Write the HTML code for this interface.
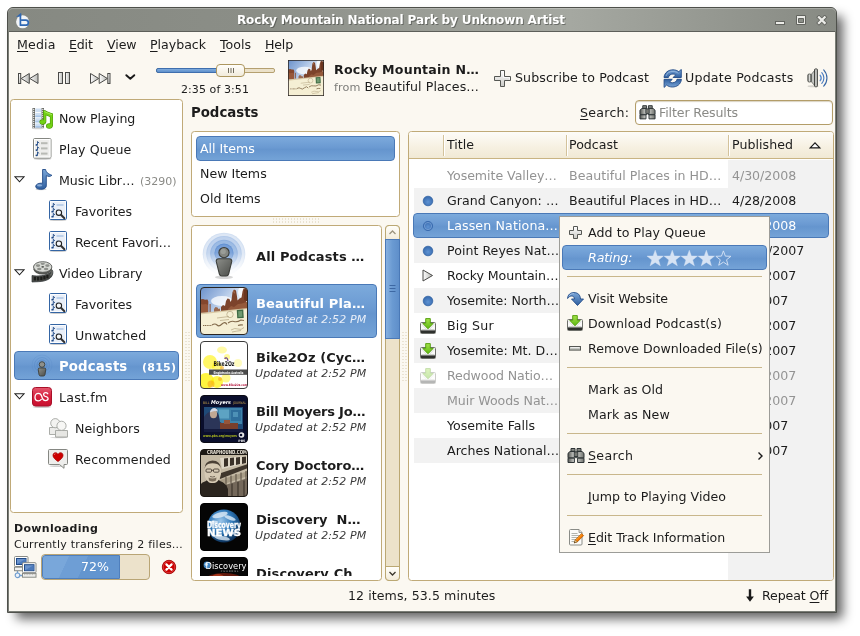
<!DOCTYPE html>
<html>
<head>
<meta charset="utf-8">
<title>Banshee</title>
<style>
*{box-sizing:border-box;margin:0;padding:0}
html,body{width:860px;height:636px;overflow:hidden;background:#fff}
body{font-family:"DejaVu Sans","Liberation Sans",sans-serif;font-size:12.6px;color:#1c1c1c;position:relative}
.abs{position:absolute}
.t{position:absolute;white-space:pre;line-height:16px;height:16px;will-change:transform}
u{text-decoration:underline;text-underline-offset:1.5px;text-decoration-thickness:1px}
#shadow{left:16px;top:16px;width:827px;height:603px;border-radius:4px;background:rgba(0,0,0,.6);filter:blur(5.5px)}
#win{left:7px;top:7px;width:830px;height:606px;background:#7b7e77;border:1px solid #4e504b;border-radius:6px 6px 0 0}
#titlebar{left:0;top:0;width:828px;height:23px;border-radius:5px 5px 0 0;box-shadow:inset 0 1px 0 rgba(255,255,255,.25);background:linear-gradient(90deg,#868982 0%,#8b8e87 30%,#9b9e97 52%,#a5a8a1 68%,#969992 84%,#878a83 100%)}
#client{left:9px;top:32px;width:826px;height:579px;background:#fbf8f1;box-shadow:0 -1px 0 #5d5f5a}
.panel{position:absolute;background:#fff;border:1px solid #c0aa78;border-radius:3.5px;overflow:hidden}
.sel{position:absolute;border:1px solid #4a79b7;border-radius:4px;background:linear-gradient(#7caadc 0%,#6b9ad2 45%,#6595ce 55%,#74a3d7 100%)}
.sep{position:absolute;height:1px;left:567px;width:195px;background:#c9b78c}
.stripe{position:absolute;left:5px;width:420px;height:25px;background:#f2f2f2}
</style>
</head>
<body>
<svg width="0" height="0" style="position:absolute"><defs>
<linearGradient id="gGray" x1="0" y1="0" x2="0" y2="1"><stop offset="0" stop-color="#fff"/><stop offset="1" stop-color="#c9c9c5"/></linearGradient>
<linearGradient id="gGrayH" x1="0" y1="0" x2="1" y2="0"><stop offset="0" stop-color="#fdfdfd"/><stop offset="1" stop-color="#b9bab6"/></linearGradient>
<linearGradient id="gBlue" x1="0" y1="0" x2="0" y2="1"><stop offset="0" stop-color="#7aa6d8"/><stop offset="1" stop-color="#2f5f9f"/></linearGradient>
<linearGradient id="gGreen" x1="0" y1="0" x2="0" y2="1"><stop offset="0" stop-color="#a5e24a"/><stop offset="1" stop-color="#5cb80f"/></linearGradient>
<linearGradient id="gRed" x1="0" y1="0" x2="0" y2="1"><stop offset="0" stop-color="#e5586f"/><stop offset="0.5" stop-color="#d51f3c"/><stop offset="1" stop-color="#c9102f"/></linearGradient>
<linearGradient id="gMetal" x1="0" y1="0" x2="1" y2="0"><stop offset="0" stop-color="#555753"/><stop offset="0.45" stop-color="#e4e5e2"/><stop offset="1" stop-color="#6f716c"/></linearGradient>
<linearGradient id="gBody" x1="0" y1="0" x2="1" y2="1"><stop offset="0" stop-color="#8d8f8a"/><stop offset="1" stop-color="#4b4d49"/></linearGradient>
<linearGradient id="gSky" x1="0" y1="0" x2="0.7" y2="0.55"><stop offset="0" stop-color="#6a90ca"/><stop offset="0.5" stop-color="#a9c1e4"/><stop offset="1" stop-color="#f4f7fb"/></linearGradient>
<radialGradient id="gRings" cx="0.5" cy="0.48" r="0.5"><stop offset="0" stop-color="#3f78c4" stop-opacity=".95"/><stop offset="0.45" stop-color="#5d8fd0" stop-opacity=".75"/><stop offset="0.7" stop-color="#86abdc" stop-opacity=".5"/><stop offset="0.9" stop-color="#b7cdeb" stop-opacity=".3"/><stop offset="1" stop-color="#dfe9f6" stop-opacity="0"/></radialGradient>
<linearGradient id="gFadeB" x1="0" y1="0" x2="0" y2="1"><stop offset="0" stop-color="#fff" stop-opacity="0"/><stop offset="0.3" stop-color="#fff" stop-opacity=".1"/><stop offset="0.8" stop-color="#fff" stop-opacity=".9"/><stop offset="1" stop-color="#fff" stop-opacity="1"/></linearGradient>
<radialGradient id="gEarth" cx="0.4" cy="0.35" r="0.7"><stop offset="0" stop-color="#9cc6ea"/><stop offset="0.5" stop-color="#2f78b8"/><stop offset="1" stop-color="#08294f"/></radialGradient>
<radialGradient id="gDot" cx="0.5" cy="0.6" r="0.6"><stop offset="0" stop-color="#5f93d3"/><stop offset="1" stop-color="#3568ac"/></radialGradient>
<g id="smartpl"><rect x="0.500" y="0.500" width="17" height="19" rx="1.200" fill="#e9eff8" stroke="#3465a4"/><rect x="1.500" y="1.500" width="15" height="17" fill="none" stroke="#fff" stroke-opacity=".8"/>
<path d="M4.3 3.2v3.300M4.3 3.5l1.700 1.300" stroke="#204a87" stroke-width=".9" fill="none"/><ellipse cx="3.5" cy="6.7" rx="1.200" ry=".9" fill="#204a87"/><path d="M4.3 8.2v3.300M4.3 8.5l1.700 1.300" stroke="#204a87" stroke-width=".9" fill="none"/><ellipse cx="3.5" cy="11.7" rx="1.200" ry=".9" fill="#204a87"/><path d="M4.3 13.2v3.300M4.3 13.5l1.700 1.300" stroke="#204a87" stroke-width=".9" fill="none"/><ellipse cx="3.5" cy="16.7" rx="1.200" ry=".9" fill="#204a87"/>
<rect x="7.500" y="4" width="7" height="2" fill="#bcd0ea"/><rect x="7.500" y="9" width="2" height="2" fill="#bcd0ea"/>
<circle cx="9.900" cy="12.700" r="2.700" fill="#f4f7fb" stroke="#222" stroke-width="1.100"/><path d="M12.200 15l3.200 3.200" stroke="#333" stroke-width="2" stroke-linecap="round"/></g>
<g id="dlicon"><rect x="0.500" y="4.500" width="15" height="11" rx="1" fill="#fafaf9" stroke="#6e706b"/><path d="M1 12.300h14v2.700H1z" fill="#2e302d"/><path d="M1.500 11.700h13" stroke="#b9bbb6" stroke-width=".8"/><path d="M1.200 5.500l5 5.500M14.800 5.500l-5 5.500" stroke="#d3d5d0" stroke-width=".8"/>
<path d="M5.700 0.600h4.600v4.800h2.900L8 10.800 2.800 5.400h2.900z" fill="url(#gGreen)" stroke="#4e9a06" stroke-width=".9" stroke-linejoin="round"/></g>
<g id="binoc"><path d="M3.5 0.5h4v2.8h-4zM9.5 0.5h4v2.8h-4z" fill="#888a85" stroke="#2e3436"/><path d="M2.5 3.5h5.4v6.3H0.5V5.3zM14.5 3.5H9.1v6.3h7.4V5.3z" fill="url(#gMetal)" stroke="#2e3436" stroke-linejoin="round"/><rect x="6.7" y="4" width="3.6" height="4.6" fill="#777974" stroke="#2e3436" stroke-width=".8"/>
<path d="M0.5 10.2h6.4v4.3H0.5zM10.1 10.2h6.4v4.3h-6.4z" fill="url(#gMetal)" stroke="#2e3436" stroke-linejoin="round"/></g>
<g id="plus16"><path d="M6.5 0.5h4v6h6v4h-6v6h-4v-6h-6v-4h6z" fill="url(#gGray)" stroke="#555753" stroke-linejoin="round"/><path d="M7.5 1.5h2v6h6v2" fill="none" stroke="#fff" stroke-opacity=".7"/></g>
<path id="star" d="M0 -8.4L2.1 -2.7 8.2 -2.5 3.4 1.3 5.1 7.2 0 3.8 -5.1 7.2 -3.4 1.3 -8.2 -2.5 -2.1 -2.7Z"/>
<clipPath id="r48"><rect x="0.5" y="0.5" width="47" height="47" rx="3.5"/></clipPath>
</defs></svg>
<div id="shadow" class="abs"></div>
<div id="win" class="abs"><div id="titlebar" class="abs"></div></div>
<div id="client" class="abs"></div>
<svg class="abs" style="left:13px;top:11px;" width="20" height="20" viewBox="0 0 20 20"><circle cx="9.600" cy="10.800" r="6.500" fill="#f2f4f7"/>
<path d="M7.400 3.400v10.800h5.400a2.550 2.550 0 0 0 0-5.100H8.300" fill="none" stroke="#2f68b4" stroke-width="1.700" stroke-linejoin="round"/>
<path d="M8.200 1.700L3 6l5.200-.8z" fill="#2f68b4"/></svg>
<svg class="abs" style="left:775px;top:15px;" width="53" height="11" viewBox="0 0 53 11"><rect x="0.500" y="6.500" width="9" height="3" fill="#ecece8" stroke="#62645f"/>
<path d="M21.500 0.500h9v9h-9z M23.500 3.500v4h5v-4z" fill="#ecece8" stroke="#62645f" fill-rule="evenodd"/>
<path d="M44 2.300l5.600 5.600M49.600 2.300l-5.600 5.600" stroke="#62645f" stroke-width="3.900" stroke-linecap="square"/>
<path d="M44 2.300l5.600 5.600M49.600 2.300l-5.600 5.600" stroke="#ecece8" stroke-width="2.300" stroke-linecap="square"/></svg>
<svg class="abs" style="left:17.5px;top:71.5px;" width="120" height="13" viewBox="0 0 120 13"><g stroke="#4a4a48" stroke-width="1" stroke-linejoin="miter">
<rect x="0.5" y="1.5" width="2.2" height="10" fill="url(#gGray)"/>
<path d="M11.3 1.5v10L3.2 6.5z" fill="url(#gGrayH)"/><path d="M20 1.5v10L11.8 6.5z" fill="url(#gGrayH)"/>
<rect x="40.5" y="0.5" width="4" height="11" fill="url(#gGrayH)"/><rect x="47.5" y="0.5" width="4" height="11" fill="url(#gGrayH)"/>
<path d="M72.5 1.5v10l8.2-5z" fill="url(#gGrayH)"/><path d="M81.2 1.5v10l8.2-5z" fill="url(#gGrayH)"/>
<rect x="89.8" y="1.5" width="2.2" height="10" fill="url(#gGray)"/></g>
<path d="M108.3 3.2l4 3.6 4-3.6" fill="none" stroke="#1a1a1a" stroke-width="1.9" stroke-linecap="round" stroke-linejoin="round"/></svg>
<div class="abs" style="left:156px;top:68px;width:119px;height:5px;border:1px solid #b5a070;border-radius:2px;background:#ebe1c9"></div><div class="abs" style="left:156px;top:68px;width:66px;height:5px;border:1px solid #3f6fae;border-radius:2px;background:linear-gradient(#7eabdd,#5f90cb)"></div><div class="abs" style="left:216px;top:64px;width:29px;height:13px;border:1px solid #ad975f;border-radius:4px;background:linear-gradient(#fffefb,#f1ebdb)"></div><svg class="abs" style="left:227px;top:67px;" width="8" height="7" viewBox="0 0 8 7"><path d="M1.5 1v5M4 1v5M6.5 1v5" stroke="#6f6a5c" stroke-width="1"/></svg>
<svg class="abs" style="left:288px;top:60px;" width="36" height="36" viewBox="0 0 48 48"><g ><rect width="48" height="48" fill="url(#gSky)"/>
<ellipse cx="22" cy="14" rx="11" ry="5" fill="#fff" opacity=".75"/><ellipse cx="43" cy="5" rx="5" ry="6" fill="#fff" opacity=".8"/>
<path d="M0 12.500l3-.5 2 .8 2.500-.3 .8 2v11H0z" fill="#84462c"/><path d="M0 17l3 .5 3-.5 2 1v8H0z" fill="#9c5c3e" opacity=".8"/>
<rect x="9.500" y="17" width="1.200" height="8" fill="#8d5a42"/><path d="M14 22l1.500-2 2 .5 1 1.500 1.500-.5v4h-6z" fill="#9a6a50"/>
<path d="M21 25v-5l2-2 2 1 1-5 1.500-2.500 2 .5 1 3 1-2 1-8 1.500-2.500 2 1 1 6 .5 4 2-2 2-1 1-6 1-3 2.500-.5V26z" fill="#7c432b"/>
<path d="M28 22l3-3 3 1 4-3 4-.5 6-2v12H27z" fill="#955a3c"/><path d="M33 5l1-2 1.200 4z" fill="#a86e4e"/><path d="M44 3l2-1 2 1v12l-4-2z" fill="#6a351f"/>
<path d="M0 26l48-5v27H0z" fill="#d9c9a6"/>
<path d="M0 27.500l48-5.500v26H0z" fill="#f5efd4"/>
<rect x="37" y="22.800" width="6.500" height="8.400" fill="#3f6b45" transform="rotate(-3 40 27)"/><rect x="38.300" y="24.200" width="3.900" height="5.600" fill="#6f9a70" transform="rotate(-3 40 27)"/>
<g stroke="#6f5434" stroke-width="1.100" fill="none" opacity=".85"><path d="M3 38.500h9" stroke-dasharray="1.200 .6"/><path d="M12 38q3-2 5 0t5-1 5 .5" /><path d="M28 36q3-2.500 6-1.500t7-1.500l3 .5"/><path d="M38 38.500q2-1 5-.5"/></g>
<g stroke="#9a8660" stroke-width=".7" fill="none" opacity=".7"><path d="M31 43q4-2.500 7-1t6-1.500"/><path d="M32 45q5-1 9-1.500"/><circle cx="30" cy="27.500" r="3.200"/><path d="M17 31l12-1.500M20 33.500l9-1"/></g></g>
<rect x="0.500" y="0.500" width="47" height="47" rx="0" fill="none" stroke="#2a2522"/></svg>
<svg class="abs" style="left:493.5px;top:69.5px;" width="17" height="17" viewBox="0 0 17 17"><use href="#plus16"/></svg>
<svg class="abs" style="left:663.2px;top:68.6px;" width="20" height="19" viewBox="0 0 20 19"><g id="rfa"><path d="M1 8.500C1.500 3.500 5.500 0.800 10 0.800c2.300 0 4.200 .7 5.800 1.900L18.300 0.400v8.100h-8.200l2.600-2.600C11.900 5.300 11 5 10 5 7.400 5 5.800 6.600 5.400 8.500z" fill="url(#gBlue)" stroke="#204a87" stroke-width=".9" stroke-linejoin="round"/></g>
<use href="#rfa" transform="rotate(180 9.700 9.400)"/>
<path d="M3 7c1-3 3.600-4.600 7-4.600 2.200 0 4 .8 5.400 2" fill="none" stroke="#a8c4e6" stroke-width=".8" opacity=".8"/></svg>
<svg class="abs" style="left:806.8px;top:68.3px;" width="23" height="20" viewBox="0 0 23 20"><ellipse cx="6" cy="18.300" rx="5.500" ry="1" fill="#000" opacity=".15"/>
<rect x="0.800" y="6" width="3.400" height="8" rx="1.300" fill="url(#gMetal)" stroke="#4a4c48" stroke-width=".8"/>
<path d="M4.200 6.500L8 2v16L4.200 13.500z" fill="url(#gMetal)" stroke="#555753" stroke-width=".7"/>
<rect x="7.500" y="0.800" width="3" height="18" rx="1.200" fill="url(#gMetal)" stroke="#3c3e3a" stroke-width=".8"/>
<g fill="none" stroke-linecap="round"><path d="M13.200 7.300a4.500 4.500 0 0 1 0 5.400" stroke="#5b8ccc" stroke-width="1.300"/><path d="M14.800 4.600a8 8 0 0 1 0 10.800" stroke="#4a7cc0" stroke-width="1.150"/><path d="M16.700 1.800a12 12 0 0 1 0 16.400" stroke="#3465a4" stroke-width="1.100"/></g></svg>
<div class="abs" style="left:635px;top:100px;width:198px;height:25px;background:#fff;border:1px solid #b39d68;border-radius:4px;box-shadow:inset 0 1px 1px rgba(150,130,80,.35)"></div>
<svg class="abs" style="left:638.5px;top:104.5px;" width="17" height="15.5" viewBox="-0.5 0 18 16"><use href="#binoc"/></svg>
<div class="panel" style="left:10px;top:99px;width:173px;height:414px"></div>
<div class="sel" style="left:14px;top:351px;width:165px;height:29px"></div>
<svg class="abs" style="left:31.5px;top:106.5px;" width="22" height="23" viewBox="0 0 22 23"><rect x="0.500" y="1" width="11.500" height="20" fill="#5d5f5a"/><rect x="3" y="1" width="6.500" height="20" fill="#fff"/>
<g fill="#cfe0f3"><rect x="3.300" y="1.500" width="5.900" height="3.600"/><rect x="3.300" y="6" width="5.900" height="4.200"/><rect x="3.300" y="11.200" width="5.900" height="4.200"/><rect x="3.300" y="16.400" width="5.900" height="4.200"/></g>
<g fill="#a9c6e8"><rect x="3.300" y="8.500" width="5.900" height="1.700"/><rect x="3.300" y="13.700" width="5.900" height="1.700"/><rect x="3.300" y="18.900" width="5.900" height="1.700"/></g>
<g fill="#fff"><rect x="1.100" y="1.8" width="1.200" height="1.100"/><rect x="10.200" y="1.8" width="1.200" height="1.100"/><rect x="1.100" y="3.8" width="1.200" height="1.100"/><rect x="10.200" y="3.8" width="1.200" height="1.100"/><rect x="1.100" y="5.8" width="1.200" height="1.100"/><rect x="10.200" y="5.8" width="1.200" height="1.100"/><rect x="1.100" y="7.8" width="1.200" height="1.100"/><rect x="10.200" y="7.8" width="1.200" height="1.100"/><rect x="1.100" y="9.8" width="1.200" height="1.100"/><rect x="10.200" y="9.8" width="1.200" height="1.100"/><rect x="1.100" y="11.8" width="1.200" height="1.100"/><rect x="10.200" y="11.8" width="1.200" height="1.100"/><rect x="1.100" y="13.8" width="1.200" height="1.100"/><rect x="10.200" y="13.8" width="1.200" height="1.100"/><rect x="1.100" y="15.8" width="1.200" height="1.100"/><rect x="10.200" y="15.8" width="1.200" height="1.100"/><rect x="1.100" y="17.8" width="1.200" height="1.100"/><rect x="10.200" y="17.8" width="1.200" height="1.100"/><rect x="1.100" y="19.8" width="1.200" height="1.100"/><rect x="10.200" y="19.8" width="1.200" height="1.100"/></g>
<ellipse cx="6" cy="21.300" rx="6.500" ry="0.900" fill="#000" opacity=".18"/>
<g fill="#4e9a06" stroke="#4e9a06" stroke-width="1.200" stroke-linejoin="round"><path d="M11.900 3.700l8.400 3.400v3.200l-8.400-3.400z"/><rect x="11.900" y="4" width="1.800" height="11"/><rect x="18.500" y="7" width="1.800" height="12"/><ellipse cx="10.700" cy="15" rx="2.700" ry="2.100"/><ellipse cx="17.300" cy="19" rx="2.700" ry="2.100"/></g>
<g fill="#73d216"><path d="M11.900 3.700l8.400 3.400v3.200l-8.400-3.400z"/><rect x="11.900" y="4" width="1.800" height="11"/><rect x="18.500" y="7" width="1.800" height="12"/><ellipse cx="10.700" cy="15" rx="2.700" ry="2.100"/><ellipse cx="17.300" cy="19" rx="2.700" ry="2.100"/></g>
<path d="M12.300 4.600l7.600 3.100" stroke="#b5ee6a" stroke-width=".8" fill="none"/></svg>
<svg class="abs" style="left:33px;top:137.5px;" width="19" height="22" viewBox="0 0 19 22"><ellipse cx="9.500" cy="20.800" rx="9" ry="1" fill="#000" opacity=".22"/><rect x="0.500" y="0.500" width="17.500" height="19.500" rx="1.200" fill="#ededeb" stroke="#858782"/><rect x="1.500" y="1.500" width="15.500" height="17.500" fill="none" stroke="#fff"/>
<path d="M4.5 3.4v3.300M4.5 3.7l1.700 1.300" stroke="#204a87" stroke-width=".9" fill="none"/><ellipse cx="3.7" cy="6.9" rx="1.200" ry=".9" fill="#204a87"/><path d="M4.5 8.6v3.300M4.5 8.9l1.700 1.300" stroke="#204a87" stroke-width=".9" fill="none"/><ellipse cx="3.7" cy="12.1" rx="1.200" ry=".9" fill="#204a87"/><path d="M4.5 13.8v3.300M4.5 14.1l1.700 1.300" stroke="#204a87" stroke-width=".9" fill="none"/><ellipse cx="3.7" cy="17.3" rx="1.200" ry=".9" fill="#204a87"/>
<g fill="#b8bab5"><rect x="8" y="4.200" width="6.500" height="2"/><rect x="8" y="9.400" width="6.500" height="2"/><rect x="8" y="14.600" width="6.500" height="2"/></g></svg>
<svg class="abs" style="left:34.5px;top:168.5px;" width="18" height="22" viewBox="0 0 18 22"><ellipse cx="6" cy="20.300" rx="5.500" ry="0.900" fill="#000" opacity=".18"/>
<path d="M7.600 0.500h3c.4 2.600 2.200 4.300 6.300 5.800-1.600 1.600-3.800 1.300-5.600 .3v10.300c0 2.200-2.500 3.400-5.600 3.400C2.800 20.300 0.700 19.200 0.700 17.500c0-2 2.600-3.300 5.300-3.300.6 0 1.100 0 1.600 .2z" fill="url(#gBlue)" stroke="#204a87" stroke-width=".9" stroke-linejoin="round"/>
<ellipse cx="4.600" cy="16.400" rx="2.600" ry="1.100" fill="#a9c6ea" opacity=".7"/></svg>
<svg class="abs" style="left:49px;top:200px;" width="19" height="21" viewBox="0 0 19 21"><ellipse cx="9" cy="20.300" rx="8.500" ry="0.800" fill="#000" opacity=".2"/><use href="#smartpl"/></svg>
<svg class="abs" style="left:49px;top:231px;" width="19" height="21" viewBox="0 0 19 21"><ellipse cx="9" cy="20.300" rx="8.500" ry="0.800" fill="#000" opacity=".2"/><use href="#smartpl"/></svg>
<svg class="abs" style="left:49px;top:293px;" width="19" height="21" viewBox="0 0 19 21"><ellipse cx="9" cy="20.300" rx="8.500" ry="0.800" fill="#000" opacity=".2"/><use href="#smartpl"/></svg>
<svg class="abs" style="left:49px;top:324px;" width="19" height="21" viewBox="0 0 19 21"><ellipse cx="9" cy="20.300" rx="8.500" ry="0.800" fill="#000" opacity=".2"/><use href="#smartpl"/></svg>
<svg class="abs" style="left:30.5px;top:261px;" width="23" height="23" viewBox="0 0 23 23"><path d="M1 14.500c5 1 14 .5 19-3.500l1.300 1.200c.6 5-6 8.300-14 8.500L1 21z" fill="#4a4c48" stroke="#2e3436" stroke-width=".7"/>
<g fill="#1c1d1b"><rect x="2.800" y="15.800" width="2.300" height="3.600"/><rect x="6" y="15.900" width="2.300" height="3.600"/><rect x="9.200" y="15.600" width="2.300" height="3.600"/><rect x="12.300" y="15" width="2.300" height="3.500"/><rect x="15.300" y="14" width="2.200" height="3.300"/></g>
<path d="M21.300 9c1.200 2 .8 4.500-1.300 6.500l-1.500-1.500c1.500-1.300 1.700-3 1-4.400z" fill="#6a6c67" stroke="#2e3436" stroke-width=".6"/>
<ellipse cx="11.700" cy="8.300" rx="9.200" ry="5.300" fill="#555753"/>
<ellipse cx="11.700" cy="6" rx="9.200" ry="5.300" fill="#d8dad5" stroke="#555753" stroke-width=".9"/>
<g fill="#8f918c"><ellipse cx="7" cy="4.600" rx="2.200" ry="1.300"/><ellipse cx="16.400" cy="4.600" rx="2.200" ry="1.300"/><ellipse cx="11.700" cy="2.800" rx="2.200" ry="1.100"/><ellipse cx="8.300" cy="8" rx="2.200" ry="1.200"/><ellipse cx="15.100" cy="8" rx="2.200" ry="1.200"/></g>
<ellipse cx="11.700" cy="5.800" rx="1.400" ry=".9" fill="#555753"/></svg>
<svg class="abs" style="left:30px;top:354px;" width="24" height="24" viewBox="0 0 24 24"><g fill="none" stroke="#4f81c2" opacity=".55"><circle cx="12" cy="11" r="5" stroke-opacity=".9"/><circle cx="12" cy="11" r="7.500" stroke-opacity=".6"/><circle cx="12" cy="11" r="10" stroke-opacity=".35"/></g>
<circle cx="12" cy="10.500" r="2.800" fill="#8e908b" stroke="#3c3e3a" stroke-width=".9"/>
<path d="M8.200 15.200q0-1.200 1.500-1.200h4.600q1.500 0 1.500 1.200l-.8 5.300q-.3 1.500-1.700 1.500h-2.600q-1.400 0-1.700-1.500z" fill="url(#gBody)" stroke="#3c3e3a" stroke-width=".9"/></svg>
<svg class="abs" style="left:32px;top:387px;" width="20" height="21" viewBox="0 0 20 21"><ellipse cx="10" cy="20" rx="9.500" ry=".9" fill="#000" opacity=".2"/><rect x="0.500" y="0.500" width="19" height="18.500" rx="3" fill="url(#gRed)" stroke="#a80f28"/>
<path d="M9.300 12.400c-.8 1-1.800 1.500-3 1.500-2 0-3.300-1.500-3.300-3.700 0-2.300 1.400-3.800 3.400-3.800 1.700 0 2.600 .9 3.200 2.600l.7 2c.5 1.500 1.300 2.600 3.100 2.600 1.500 0 2.700-.8 2.700-2.100 0-1.200-.8-1.600-2-1.900l-.9-.2c-1-.3-1.600-.9-1.600-1.800 0-1.200 1-1.900 2.100-1.900 1 0 1.700 .4 2.100 1.100" fill="none" stroke="#fff" stroke-width="1.300" stroke-linecap="round"/></svg>
<svg class="abs" style="left:48.5px;top:417.5px;" width="20" height="21" viewBox="0 0 20 21"><g stroke="#a3a5a0" stroke-width=".9"><path d="M0.500 9.500h11.500v7H0.500z" fill="#ececea"/><circle cx="6.300" cy="5.200" r="4.600" fill="#f3f3f1"/>
<path d="M6.500 12.500h12v6.500h-12z" fill="#e6e6e3"/><circle cx="12.500" cy="7.800" r="4.600" fill="#f7f7f5"/></g><ellipse cx="10" cy="19.600" rx="9" ry=".7" fill="#000" opacity=".15"/></svg>
<svg class="abs" style="left:48px;top:449px;" width="21" height="20" viewBox="0 0 21 20"><ellipse cx="9" cy="17.200" rx="7.500" ry=".9" fill="#000" opacity=".18"/><path d="M1.500 0.500h17q1 0 1 1v13q0 1-1 1h-2.500v3.800L11.500 15.500H1.500q-1 0-1-1v-13q0-1 1-1z" fill="#eeeeec" stroke="#858782" stroke-linejoin="round"/>
<path d="M10 12.600C5.500 9.300 5 7.600 5 6.200 5 4.700 6.100 3.700 7.400 3.700c1.100 0 2 .6 2.600 1.600 .6-1 1.500-1.600 2.600-1.600 1.300 0 2.400 1 2.400 2.500 0 1.400-.5 3.100-5 6.400z" fill="#cc0000" stroke="#a40000" stroke-width=".7"/><path d="M6.300 6c0-.8 .6-1.300 1.200-1.300" stroke="#ef6b6b" stroke-width=".8" fill="none"/></svg>
<svg class="abs" style="left:14px;top:175.5px;" width="11" height="7" viewBox="0 0 11 7"><path d="M1 0.800h9L5.500 5.800z" fill="#fff" stroke="#222" stroke-width="1.050" stroke-linejoin="miter"/></svg>
<svg class="abs" style="left:14px;top:268.5px;" width="11" height="7" viewBox="0 0 11 7"><path d="M1 0.800h9L5.500 5.800z" fill="#fff" stroke="#222" stroke-width="1.050" stroke-linejoin="miter"/></svg>
<svg class="abs" style="left:14px;top:392.5px;" width="11" height="7" viewBox="0 0 11 7"><path d="M1 0.800h9L5.500 5.800z" fill="#fff" stroke="#222" stroke-width="1.050" stroke-linejoin="miter"/></svg>
<svg class="abs" style="left:13.5px;top:555.5px;" width="23" height="23" viewBox="0 0 23 23"><g fill="none" stroke="#729fcf" stroke-width="1.300"><path d="M3.500 15v3M3.500 19.500h6"/></g><circle cx="3.500" cy="19.300" r="2.300" fill="#eef3fa" stroke="#729fcf" stroke-width="1.200"/>
<rect x="0.500" y="0.500" width="13.500" height="10" rx="1" fill="#fff" stroke="#888a85"/><rect x="2.500" y="2.500" width="9.500" height="6" fill="#6a93cc" stroke="#204a87"/><path d="M3 8l8.500-5v5z" fill="#4c7abb"/>
<rect x="0.500" y="11.200" width="9" height="3.500" fill="#f2f2f0" stroke="#888a85"/>
<rect x="8.500" y="6.700" width="13.500" height="10" rx="1" fill="#fff" stroke="#888a85"/><rect x="10.500" y="8.700" width="9.500" height="6" fill="#6a93cc" stroke="#204a87"/><path d="M11 14.200l8.500-5v5z" fill="#4c7abb"/>
<rect x="8.500" y="17.400" width="13.500" height="3.800" fill="#f2f2f0" stroke="#888a85"/><path d="M10 18.700h10.500" stroke="#b5b7b2" stroke-dasharray="1 .6"/></svg>
<div class="abs" style="left:41px;top:554px;width:109px;height:26px;background:#ece2cb;border:1px solid #b9a575;border-radius:4px;overflow:hidden"><div class="abs" style="left:0;top:0;width:78px;height:24px;border:1px solid #4f7fbd;border-radius:3px 0 0 3px;background:linear-gradient(115deg,#79a7da 0%,#79a7da 30%,#6e9ed5 30.5%,#6e9ed5 52%,#6395cf 52.5%,#6395cf 100%)"></div></div>
<svg class="abs" style="left:161.2px;top:558.8px;" width="16" height="16" viewBox="0 0 16 16"><circle cx="8" cy="8" r="6.700" fill="#cc0000" stroke="#a40000" stroke-width=".9"/><circle cx="8" cy="8" r="5.800" fill="none" stroke="#e35b5b" stroke-width=".7" opacity=".8"/>
<path d="M5.400 5.400l5.200 5.200M10.600 5.400l-5.200 5.200" stroke="#fff" stroke-width="2.200" stroke-linecap="round"/></svg>
<svg class="abs" style="left:185px;top:331px;" width="5" height="52" viewBox="0 0 5 52"><rect x="0.5" y="1" width="1" height="1" fill="#d9ceb4"/><rect x="3.5" y="1" width="1" height="1" fill="#d9ceb4"/><rect x="0.5" y="4" width="1" height="1" fill="#d9ceb4"/><rect x="3.5" y="4" width="1" height="1" fill="#d9ceb4"/><rect x="0.5" y="7" width="1" height="1" fill="#d9ceb4"/><rect x="3.5" y="7" width="1" height="1" fill="#d9ceb4"/><rect x="0.5" y="10" width="1" height="1" fill="#d9ceb4"/><rect x="3.5" y="10" width="1" height="1" fill="#d9ceb4"/><rect x="0.5" y="13" width="1" height="1" fill="#d9ceb4"/><rect x="3.5" y="13" width="1" height="1" fill="#d9ceb4"/><rect x="0.5" y="16" width="1" height="1" fill="#d9ceb4"/><rect x="3.5" y="16" width="1" height="1" fill="#d9ceb4"/><rect x="0.5" y="19" width="1" height="1" fill="#d9ceb4"/><rect x="3.5" y="19" width="1" height="1" fill="#d9ceb4"/><rect x="0.5" y="22" width="1" height="1" fill="#d9ceb4"/><rect x="3.5" y="22" width="1" height="1" fill="#d9ceb4"/><rect x="0.5" y="25" width="1" height="1" fill="#d9ceb4"/><rect x="3.5" y="25" width="1" height="1" fill="#d9ceb4"/><rect x="0.5" y="28" width="1" height="1" fill="#d9ceb4"/><rect x="3.5" y="28" width="1" height="1" fill="#d9ceb4"/><rect x="0.5" y="31" width="1" height="1" fill="#d9ceb4"/><rect x="3.5" y="31" width="1" height="1" fill="#d9ceb4"/><rect x="0.5" y="34" width="1" height="1" fill="#d9ceb4"/><rect x="3.5" y="34" width="1" height="1" fill="#d9ceb4"/><rect x="0.5" y="37" width="1" height="1" fill="#d9ceb4"/><rect x="3.5" y="37" width="1" height="1" fill="#d9ceb4"/><rect x="0.5" y="40" width="1" height="1" fill="#d9ceb4"/><rect x="3.5" y="40" width="1" height="1" fill="#d9ceb4"/><rect x="0.5" y="43" width="1" height="1" fill="#d9ceb4"/><rect x="3.5" y="43" width="1" height="1" fill="#d9ceb4"/><rect x="0.5" y="46" width="1" height="1" fill="#d9ceb4"/><rect x="3.5" y="46" width="1" height="1" fill="#d9ceb4"/><rect x="0.5" y="49" width="1" height="1" fill="#d9ceb4"/><rect x="3.5" y="49" width="1" height="1" fill="#d9ceb4"/></svg>
<svg class="abs" style="left:402px;top:331px;" width="5" height="52" viewBox="0 0 5 52"><rect x="0.5" y="1" width="1" height="1" fill="#d9ceb4"/><rect x="3.5" y="1" width="1" height="1" fill="#d9ceb4"/><rect x="0.5" y="4" width="1" height="1" fill="#d9ceb4"/><rect x="3.5" y="4" width="1" height="1" fill="#d9ceb4"/><rect x="0.5" y="7" width="1" height="1" fill="#d9ceb4"/><rect x="3.5" y="7" width="1" height="1" fill="#d9ceb4"/><rect x="0.5" y="10" width="1" height="1" fill="#d9ceb4"/><rect x="3.5" y="10" width="1" height="1" fill="#d9ceb4"/><rect x="0.5" y="13" width="1" height="1" fill="#d9ceb4"/><rect x="3.5" y="13" width="1" height="1" fill="#d9ceb4"/><rect x="0.5" y="16" width="1" height="1" fill="#d9ceb4"/><rect x="3.5" y="16" width="1" height="1" fill="#d9ceb4"/><rect x="0.5" y="19" width="1" height="1" fill="#d9ceb4"/><rect x="3.5" y="19" width="1" height="1" fill="#d9ceb4"/><rect x="0.5" y="22" width="1" height="1" fill="#d9ceb4"/><rect x="3.5" y="22" width="1" height="1" fill="#d9ceb4"/><rect x="0.5" y="25" width="1" height="1" fill="#d9ceb4"/><rect x="3.5" y="25" width="1" height="1" fill="#d9ceb4"/><rect x="0.5" y="28" width="1" height="1" fill="#d9ceb4"/><rect x="3.5" y="28" width="1" height="1" fill="#d9ceb4"/><rect x="0.5" y="31" width="1" height="1" fill="#d9ceb4"/><rect x="3.5" y="31" width="1" height="1" fill="#d9ceb4"/><rect x="0.5" y="34" width="1" height="1" fill="#d9ceb4"/><rect x="3.5" y="34" width="1" height="1" fill="#d9ceb4"/><rect x="0.5" y="37" width="1" height="1" fill="#d9ceb4"/><rect x="3.5" y="37" width="1" height="1" fill="#d9ceb4"/><rect x="0.5" y="40" width="1" height="1" fill="#d9ceb4"/><rect x="3.5" y="40" width="1" height="1" fill="#d9ceb4"/><rect x="0.5" y="43" width="1" height="1" fill="#d9ceb4"/><rect x="3.5" y="43" width="1" height="1" fill="#d9ceb4"/><rect x="0.5" y="46" width="1" height="1" fill="#d9ceb4"/><rect x="3.5" y="46" width="1" height="1" fill="#d9ceb4"/><rect x="0.5" y="49" width="1" height="1" fill="#d9ceb4"/><rect x="3.5" y="49" width="1" height="1" fill="#d9ceb4"/></svg>
<svg class="abs" style="left:272px;top:218px;" width="48" height="5" viewBox="0 0 48 5"><rect x="1" y="0.5" width="1" height="1" fill="#d9ceb4"/><rect x="1" y="3.5" width="1" height="1" fill="#d9ceb4"/><rect x="4" y="0.5" width="1" height="1" fill="#d9ceb4"/><rect x="4" y="3.5" width="1" height="1" fill="#d9ceb4"/><rect x="7" y="0.5" width="1" height="1" fill="#d9ceb4"/><rect x="7" y="3.5" width="1" height="1" fill="#d9ceb4"/><rect x="10" y="0.5" width="1" height="1" fill="#d9ceb4"/><rect x="10" y="3.5" width="1" height="1" fill="#d9ceb4"/><rect x="13" y="0.5" width="1" height="1" fill="#d9ceb4"/><rect x="13" y="3.5" width="1" height="1" fill="#d9ceb4"/><rect x="16" y="0.5" width="1" height="1" fill="#d9ceb4"/><rect x="16" y="3.5" width="1" height="1" fill="#d9ceb4"/><rect x="19" y="0.5" width="1" height="1" fill="#d9ceb4"/><rect x="19" y="3.5" width="1" height="1" fill="#d9ceb4"/><rect x="22" y="0.5" width="1" height="1" fill="#d9ceb4"/><rect x="22" y="3.5" width="1" height="1" fill="#d9ceb4"/><rect x="25" y="0.5" width="1" height="1" fill="#d9ceb4"/><rect x="25" y="3.5" width="1" height="1" fill="#d9ceb4"/><rect x="28" y="0.5" width="1" height="1" fill="#d9ceb4"/><rect x="28" y="3.5" width="1" height="1" fill="#d9ceb4"/><rect x="31" y="0.5" width="1" height="1" fill="#d9ceb4"/><rect x="31" y="3.5" width="1" height="1" fill="#d9ceb4"/><rect x="34" y="0.5" width="1" height="1" fill="#d9ceb4"/><rect x="34" y="3.5" width="1" height="1" fill="#d9ceb4"/><rect x="37" y="0.5" width="1" height="1" fill="#d9ceb4"/><rect x="37" y="3.5" width="1" height="1" fill="#d9ceb4"/><rect x="40" y="0.5" width="1" height="1" fill="#d9ceb4"/><rect x="40" y="3.5" width="1" height="1" fill="#d9ceb4"/><rect x="43" y="0.5" width="1" height="1" fill="#d9ceb4"/><rect x="43" y="3.5" width="1" height="1" fill="#d9ceb4"/><rect x="46" y="0.5" width="1" height="1" fill="#d9ceb4"/><rect x="46" y="3.5" width="1" height="1" fill="#d9ceb4"/></svg>
<div class="panel" style="left:191px;top:131px;width:209px;height:86px"></div>
<div class="sel" style="left:196px;top:136px;width:199px;height:25px"></div>
<div class="panel" style="left:191px;top:225px;width:191px;height:356px"><div class="abs" style="left:0;top:0;width:189px;height:350px;overflow:hidden"><div class="abs" style="left:-192px;top:-226px;width:860px;height:636px">
<div class="sel" style="left:196px;top:284px;width:181px;height:54px"></div>
<svg class="abs" style="left:202px;top:232px;" width="44" height="48" viewBox="0 0 44 48"><circle cx="22" cy="22" r="21.300" fill="#d3e0f2"/><circle cx="22" cy="22" r="20.300" fill="#dde7f5"/>
<circle cx="22" cy="21.800" r="17.800" fill="#b3caea"/><circle cx="22" cy="21.800" r="16.800" fill="#bfd2ed"/>
<circle cx="22" cy="21.500" r="13.800" fill="#8fb1e0"/><circle cx="22" cy="21.500" r="12.800" fill="#9bbae3"/>
<circle cx="22" cy="21" r="9.600" fill="#5f8fd2"/><circle cx="22" cy="21" r="8.600" fill="#6f9ad6"/>
<rect x="0" y="10" width="44" height="36" fill="url(#gFadeB)"/>
<ellipse cx="22" cy="45.300" rx="9" ry="1.800" fill="#000" opacity=".16"/>
<circle cx="22" cy="20.600" r="5.100" fill="#858782" stroke="#3c3e3a" stroke-width="1.100"/><circle cx="21.200" cy="19.400" r="2.600" fill="#a9aba6" opacity=".6"/>
<path d="M14.200 29.300q0-2.500 2.600-2.500h10.400q2.600 0 2.600 2.500l-3.200 12.700q-.5 2-2.400 2h-4.400q-1.900 0-2.400-2z" fill="url(#gBody)" stroke="#3c3e3a" stroke-width="1.100"/></svg>
<svg class="abs" style="left:200px;top:287px;" width="48" height="48" viewBox="0 0 48 48"><g clip-path="url(#r48)"><rect width="48" height="48" fill="url(#gSky)"/>
<ellipse cx="22" cy="14" rx="11" ry="5" fill="#fff" opacity=".75"/><ellipse cx="43" cy="5" rx="5" ry="6" fill="#fff" opacity=".8"/>
<path d="M0 12.500l3-.5 2 .8 2.500-.3 .8 2v11H0z" fill="#84462c"/><path d="M0 17l3 .5 3-.5 2 1v8H0z" fill="#9c5c3e" opacity=".8"/>
<rect x="9.500" y="17" width="1.200" height="8" fill="#8d5a42"/><path d="M14 22l1.500-2 2 .5 1 1.500 1.500-.5v4h-6z" fill="#9a6a50"/>
<path d="M21 25v-5l2-2 2 1 1-5 1.500-2.500 2 .5 1 3 1-2 1-8 1.500-2.500 2 1 1 6 .5 4 2-2 2-1 1-6 1-3 2.500-.5V26z" fill="#7c432b"/>
<path d="M28 22l3-3 3 1 4-3 4-.5 6-2v12H27z" fill="#955a3c"/><path d="M33 5l1-2 1.200 4z" fill="#a86e4e"/><path d="M44 3l2-1 2 1v12l-4-2z" fill="#6a351f"/>
<path d="M0 26l48-5v27H0z" fill="#d9c9a6"/>
<path d="M0 27.500l48-5.500v26H0z" fill="#f5efd4"/>
<rect x="37" y="22.800" width="6.500" height="8.400" fill="#3f6b45" transform="rotate(-3 40 27)"/><rect x="38.300" y="24.200" width="3.900" height="5.600" fill="#6f9a70" transform="rotate(-3 40 27)"/>
<g stroke="#6f5434" stroke-width="1.100" fill="none" opacity=".85"><path d="M3 38.500h9" stroke-dasharray="1.200 .6"/><path d="M12 38q3-2 5 0t5-1 5 .5" /><path d="M28 36q3-2.500 6-1.500t7-1.500l3 .5"/><path d="M38 38.500q2-1 5-.5"/></g>
<g stroke="#9a8660" stroke-width=".7" fill="none" opacity=".7"><path d="M31 43q4-2.500 7-1t6-1.500"/><path d="M32 45q5-1 9-1.500"/><circle cx="30" cy="27.500" r="3.200"/><path d="M17 31l12-1.500M20 33.500l9-1"/></g></g>
<rect x="0.500" y="0.500" width="47" height="47" rx="3.5" fill="none" stroke="#2a2522"/></svg>
<svg class="abs" style="left:200px;top:341px;will-change:transform" width="48" height="48" viewBox="0 0 48 48"><g clip-path="url(#r48)"><rect width="48" height="48" fill="#fff"/>
<g fill="#fff200"><ellipse cx="22" cy="9" rx="5" ry="3.500" opacity=".35"/><circle cx="10" cy="21" r="7" opacity=".6"/><circle cx="17" cy="26" r="5" opacity=".5"/><circle cx="6" cy="40" r="8" opacity=".75"/><circle cx="17" cy="41" r="6" opacity=".7"/><circle cx="26" cy="37" r="4.500" opacity=".45"/><circle cx="27" cy="16" r="3" opacity=".4"/><circle cx="38" cy="22" r="4" opacity=".25"/></g>
<g fill="#f7a81b" opacity=".6"><circle cx="11" cy="43" r="3.500"/><circle cx="22" cy="27" r="2"/><circle cx="20" cy="38" r="2"/></g>
<path d="M24.500 17.500q3-2 3.500 2.500" stroke="#5a2d91" stroke-width="1.100" fill="none"/>
<text x="24" y="25" text-anchor="middle" textLength="21" lengthAdjust="spacingAndGlyphs" style="font-family:'DejaVu Sans','Liberation Sans',sans-serif;font-weight:bold;font-size:6.500px" fill="#111">Bike2Oz</text>
<rect x="9" y="28.500" width="39" height="5.300" fill="#4d4d4d"/><text x="28.500" y="32.600" text-anchor="middle" textLength="30" lengthAdjust="spacingAndGlyphs" style="font-family:'DejaVu Sans','Liberation Sans',sans-serif;font-weight:bold;font-size:3.600px" fill="#fff">Singletracks Australia</text>
<text x="47" y="44.500" text-anchor="end" textLength="26" lengthAdjust="spacingAndGlyphs" style="font-family:'DejaVu Sans','Liberation Sans',sans-serif;font-weight:bold;font-size:3.200px" fill="#b3123a">www.Bike2Oz.com</text></g>
<rect x="0.500" y="0.500" width="47" height="47" rx="3.500" fill="none" stroke="#3a3a3a"/></svg>
<svg class="abs" style="left:200px;top:395px;will-change:transform" width="48" height="48" viewBox="0 0 48 48"><g clip-path="url(#r48)"><rect width="48" height="48" fill="#0a0e2c"/>
<rect x="4" y="12" width="39" height="25" fill="#1f4a78"/><rect x="17" y="13" width="25" height="16" fill="#3f83aa"/><rect x="19" y="14.500" width="10" height="9" fill="#63a9c8" opacity=".85"/><rect x="31" y="15" width="10" height="11" fill="#2f6f9c"/><rect x="33" y="17" width="5" height="5" fill="#5a9fc2" opacity=".7"/>
<path d="M4 37V22q3-5 8-6 6 0 7 5l1 6 5 3v7z" fill="#2b3558"/><ellipse cx="13.500" cy="19" rx="3.600" ry="4.200" fill="#c2a893"/><path d="M9.800 17.500q1-4.500 4.500-4.500 3 0 3.500 3.500-3.500-1.500-8 1z" fill="#d3d8e4"/>
<rect x="20" y="28" width="18" height="6" fill="#7a3f2c"/><rect x="24" y="25" width="6" height="4" fill="#96553a"/><rect x="4" y="34" width="39" height="3" fill="#141a3c"/>
<text x="3" y="8.500" textLength="6.500" lengthAdjust="spacingAndGlyphs" style="font-family:'DejaVu Sans','Liberation Sans',sans-serif;font-size:3.400px" fill="#c8a24a">BILL</text><text x="11" y="9" textLength="20" lengthAdjust="spacingAndGlyphs" style="font-family:'DejaVu Sans','Liberation Sans',sans-serif;font-style:italic;font-weight:bold;font-size:5px" fill="#fff">Moyers</text><text x="33" y="8.500" textLength="13" lengthAdjust="spacingAndGlyphs" style="font-family:'DejaVu Sans','Liberation Sans',sans-serif;font-size:3.400px" fill="#c8a24a">JOURNAL</text>
<text x="3" y="41.800" textLength="34" lengthAdjust="spacingAndGlyphs" style="font-family:'DejaVu Sans','Liberation Sans',sans-serif;font-weight:bold;font-size:3.700px" fill="#aebb1e">www.pbs.org/moyers</text><circle cx="41.500" cy="40" r="2.800" fill="#e8e8e8"/><circle cx="41" cy="40" r="1.300" fill="#0a0e2c"/><text x="38.300" y="46.800" style="font-family:'DejaVu Sans','Liberation Sans',sans-serif;font-weight:bold;font-size:3.200px" fill="#e8e8e8">PBS</text></g>
<rect x="0.500" y="0.500" width="47" height="47" rx="3.500" fill="none" stroke="#0a0a14"/></svg>
<svg class="abs" style="left:200px;top:449px;will-change:transform" width="48" height="48" viewBox="0 0 48 48"><g clip-path="url(#r48)"><rect width="48" height="48" fill="#c4b9a4"/>
<rect width="48" height="6" fill="#1c1814"/><text x="27" y="5.400" text-anchor="middle" textLength="40" lengthAdjust="spacingAndGlyphs" style="font-family:'DejaVu Sans','Liberation Sans',sans-serif;font-weight:bold;font-size:5.600px" fill="#ece6da">CRAPHOUND.COM</text>
<path d="M20 9l28-2v7L22 20z" fill="#ded6c6"/>
<g fill="#3a3128"><path d="M24 9.500l4-.5v8l-4 1z"/><path d="M30 9l4-.5v7.500l-4 1z"/><path d="M36 8.500l4-.5v7l-4 1z"/><path d="M42 8l4-.5v6.500l-4 1z"/></g>
<path d="M18 25L48 15v4L20 30z" fill="#3f362c"/><path d="M20 31l28-9v5l-27 9z" fill="#a89c86"/>
<g stroke="#5e5345" stroke-width="1.100"><path d="M26 28v8M31 26.500v8M36 25v8M41 23.500v8M46 22v8"/></g>
<path d="M22 37l26-8v19H22z" fill="#74685a"/><g stroke="#3f362c" stroke-width="1.200"><path d="M26 36v12M32 34.500v13.500M38 33v15M44 31.500v16.500"/></g>
<path d="M0 48V36q2-3 6-4l2-2h10l2 2q6 2 8 8v8z" fill="#2a241e"/>
<path d="M4.500 20q0-8 8-8.500 8 0 8.500 8.500v5q-1 6-5 8.500-3.500 1-7 0-4-3-4.500-8.500z" fill="#d6cab4"/>
<path d="M4.500 20q0-8 8-8.500 8 0 8.500 8.500-1-4-4-5-4.500-1.500-9 0-3 1.500-3.500 5z" fill="#4a4036"/>
<g fill="none" stroke="#4a4036" stroke-width=".9"><rect x="6" y="20" width="5.500" height="3.200" rx="1"/><rect x="13.500" y="20" width="5.500" height="3.200" rx="1"/><path d="M11.500 21.300h2"/></g>
<path d="M8.500 28.500q4 2 8 0l-.5 3q-3.500 2-7 0z" fill="#7d705e"/><path d="M10 27.500q2.500 1 5 0" stroke="#5c4f42" stroke-width=".8" fill="none"/></g>
<rect x="0.500" y="0.500" width="47" height="47" rx="3.500" fill="none" stroke="#1a1612"/></svg>
<svg class="abs" style="left:200px;top:503px;will-change:transform" width="48" height="48" viewBox="0 0 48 48"><g clip-path="url(#r48)"><rect width="48" height="48" fill="#050505"/>
<circle cx="24" cy="23" r="16.500" fill="url(#gEarth)"/>
<g fill="#e8f2fb" opacity=".75"><ellipse cx="20" cy="12" rx="8" ry="2.600" transform="rotate(-15 20 12)"/><ellipse cx="30" cy="15" rx="6" ry="1.800" transform="rotate(20 30 15)"/><ellipse cx="14" cy="19" rx="4" ry="1.600"/><ellipse cx="22" cy="35" rx="8" ry="2" transform="rotate(10 22 35)"/><ellipse cx="32" cy="30" rx="4" ry="1.500"/><ellipse cx="16" cy="33" rx="3" ry="1.200"/></g>
<text x="24" y="24.600" text-anchor="middle" textLength="34" lengthAdjust="spacingAndGlyphs" style="font-family:'DejaVu Sans','Liberation Sans',sans-serif;font-weight:bold;font-size:8px" fill="#fff" stroke="#fff" stroke-width=".3">Discovery</text>
<text x="24" y="32.600" text-anchor="middle" textLength="34" lengthAdjust="spacingAndGlyphs" style="font-family:'DejaVu Sans','Liberation Sans',sans-serif;font-weight:bold;font-size:8.500px" fill="#fff" stroke="#fff" stroke-width=".3">NEWS</text></g>
<rect x="0.500" y="0.500" width="47" height="47" rx="3.500" fill="none" stroke="#000"/></svg>
<svg class="abs" style="left:200px;top:557px;will-change:transform" width="48" height="48" viewBox="0 0 48 48"><g clip-path="url(#r48)"><rect width="48" height="48" fill="#060606"/>
<ellipse cx="24" cy="22" rx="18" ry="6" fill="#b02a14" opacity=".55"/><ellipse cx="18" cy="20" rx="6" ry="3" fill="#e8542a" opacity=".5"/>
<circle cx="7" cy="8" r="3.400" fill="#3f86c4"/><circle cx="6.300" cy="7.300" r="1.600" fill="#d8ebf8" opacity=".8"/>
<text x="26" y="11.800" text-anchor="middle" textLength="41" lengthAdjust="spacingAndGlyphs" style="font-family:'DejaVu Sans','Liberation Sans',sans-serif;font-size:9.500px" fill="#fff">Discovery</text>
<text x="30" y="15.200" text-anchor="middle" style="font-family:'DejaVu Sans','Liberation Sans',sans-serif;font-size:2.400px;letter-spacing:1px" fill="#bbb">CHANNEL</text></g>
<rect x="0.500" y="0.500" width="47" height="47" rx="3.500" fill="none" stroke="#000"/></svg>
<div class="t" style="left:256.4px;top:249px;font-size:13px;font-weight:bold;letter-spacing:0.109px;">All Podcasts …</div>
<div class="t" style="left:255.9px;top:296px;font-size:13px;font-weight:bold;color:#fff;letter-spacing:0.152px;">Beautiful Pla…</div>
<div class="t" style="left:255.4px;top:312px;font-size:11px;font-style:italic;color:#e8eef8;letter-spacing:0.116px;">Updated at 2:52 PM</div>
<div class="t" style="left:255.9px;top:350px;font-size:13px;font-weight:bold;letter-spacing:0.066px;">Bike2Oz (Cyc…</div>
<div class="t" style="left:255.4px;top:366px;font-size:11px;font-style:italic;color:#3a3a3a;letter-spacing:0.116px;">Updated at 2:52 PM</div>
<div class="t" style="left:255.9px;top:404px;font-size:13px;font-weight:bold;letter-spacing:-0.214px;">Bill Moyers Jo…</div>
<div class="t" style="left:255.4px;top:420px;font-size:11px;font-style:italic;color:#3a3a3a;letter-spacing:0.116px;">Updated at 2:52 PM</div>
<div class="t" style="left:255.9px;top:458px;font-size:13px;font-weight:bold;letter-spacing:-0.039px;">Cory Doctoro…</div>
<div class="t" style="left:255.4px;top:474px;font-size:11px;font-style:italic;color:#3a3a3a;letter-spacing:0.116px;">Updated at 2:52 PM</div>
<div class="t" style="left:255.9px;top:512px;font-size:13px;font-weight:bold;letter-spacing:-0.026px;">Discovery  N…</div>
<div class="t" style="left:255.4px;top:528px;font-size:11px;font-style:italic;color:#3a3a3a;letter-spacing:0.116px;">Updated at 2:52 PM</div>
<div class="t" style="left:255.9px;top:566px;font-size:13px;font-weight:bold;letter-spacing:0.131px;">Discovery Ch</div>
</div></div></div>
<div class="abs" style="left:385px;top:225px;width:15px;height:356px;background:#ece2ca;border:1px solid #bba873;border-radius:4px"></div><div class="abs" style="left:385px;top:225px;width:15px;height:15px;background:linear-gradient(#fffefa,#f3ecdb);border:1px solid #bba873;border-radius:4px 4px 0 0"></div><div class="abs" style="left:385px;top:566px;width:15px;height:15px;background:linear-gradient(#fffefa,#f3ecdb);border:1px solid #bba873;border-radius:0 0 4px 4px"></div><div class="abs" style="left:385px;top:239px;width:15px;height:100px;background:linear-gradient(90deg,#86b0df,#6a9ad2 50%,#5f8fca);border:1px solid #4a79b7"></div><svg class="abs" style="left:388px;top:229px;" width="9" height="7" viewBox="0 0 9 7"><path d="M1.500 5l3-3 3 3" fill="none" stroke="#9c947e" stroke-width="1.300"/></svg><svg class="abs" style="left:388px;top:570px;" width="9" height="7" viewBox="0 0 9 7"><path d="M1.500 2l3 3 3-3" fill="none" stroke="#3a362c" stroke-width="1.300"/></svg><svg class="abs" style="left:389px;top:284px;" width="8" height="9" viewBox="0 0 8 9"><path d="M0.500 1.500h6M0.500 4.500h6M0.500 7.500h6" stroke="#3d68a3" stroke-width="1"/></svg>
<div class="panel" style="left:408px;top:131px;width:426px;height:450px">
<div class="abs" style="left:0;top:0;width:424px;height:27px;background:linear-gradient(#fdfcf8,#f6f0e1 60%,#f1e9d5);border-bottom:1px solid #c9b483"></div>
<div class="abs" style="left:34px;top:3px;width:1px;height:21px;background:#d3c29b"></div><div class="abs" style="left:35px;top:3px;width:1px;height:21px;background:#fff"></div>
<div class="abs" style="left:157px;top:3px;width:1px;height:21px;background:#d3c29b"></div><div class="abs" style="left:158px;top:3px;width:1px;height:21px;background:#fff"></div>
<div class="abs" style="left:319px;top:3px;width:1px;height:21px;background:#d3c29b"></div><div class="abs" style="left:320px;top:3px;width:1px;height:21px;background:#fff"></div>
<div class="abs" style="left:319px;top:28px;width:105px;height:421px;background:#f2f2f2"></div>
<div class="stripe" style="top:56px;width:314px"></div>
<div class="stripe" style="top:106px;width:314px"></div>
<div class="stripe" style="top:156px;width:314px"></div>
<div class="stripe" style="top:206px;width:314px"></div>
<div class="stripe" style="top:256px;width:314px"></div>
<div class="stripe" style="top:306px;width:314px"></div>

</div>
<div class="sel" style="left:413px;top:213px;width:416px;height:25px"></div>
<svg class="abs" style="left:422px;top:194.8px;" width="12" height="12" viewBox="0 0 12 12"><circle cx="6" cy="6" r="4.800" fill="url(#gDot)" stroke="#3465a4" stroke-width=".8"/></svg>
<svg class="abs" style="left:422px;top:219.8px;" width="12" height="12" viewBox="0 0 12 12"><circle cx="6" cy="6" r="4.600" fill="url(#gDot)" stroke="#3a6cb0" stroke-width="1"/><circle cx="6" cy="6" r="3.600" fill="none" stroke="#8fb4e2" stroke-width=".7" opacity=".8"/></svg>
<svg class="abs" style="left:422px;top:244.8px;" width="12" height="12" viewBox="0 0 12 12"><circle cx="6" cy="6" r="4.800" fill="url(#gDot)" stroke="#3465a4" stroke-width=".8"/></svg>
<svg class="abs" style="left:422px;top:294.8px;" width="12" height="12" viewBox="0 0 12 12"><circle cx="6" cy="6" r="4.800" fill="url(#gDot)" stroke="#3465a4" stroke-width=".8"/></svg>
<svg class="abs" style="left:422px;top:269px;" width="12" height="13" viewBox="0 0 12 13"><path d="M1 1l9.500 5.500L1 12z" fill="url(#gGrayH)" stroke="#4a4a48" stroke-width="1" stroke-linejoin="miter"/></svg>
<svg class="abs" style="left:420px;top:318px;" width="16" height="16" viewBox="0 0 16 16"><use href="#dlicon"/></svg>
<svg class="abs" style="left:420px;top:343px;" width="16" height="16" viewBox="0 0 16 16"><use href="#dlicon"/></svg>
<svg class="abs" style="left:420px;top:368px;opacity:.35" width="16" height="16" viewBox="0 0 16 16"><use href="#dlicon"/></svg>
<svg class="abs" style="left:809px;top:142px;" width="13" height="7" viewBox="0 0 13 7"><path d="M1.200 5.800L6 0.900l4.800 4.900z" fill="#fff" stroke="#1a1a1a" stroke-width="1.200" stroke-linejoin="miter"/></svg>
<div class="t" style="left:237.1px;top:12px;font-size:12px;font-weight:bold;color:#fff;letter-spacing:-0.129px;text-shadow:1px 1px 0 rgba(60,62,58,.55)">Rocky Mountain National Park by Unknown Artist</div>
<div class="t" style="left:16.5px;top:37px;letter-spacing:0.151px;"><u>M</u>edia</div>
<div class="t" style="left:68.8px;top:37px;letter-spacing:-0.177px;"><u>E</u>dit</div>
<div class="t" style="left:106.5px;top:37px;letter-spacing:-0.077px;"><u>V</u>iew</div>
<div class="t" style="left:149.7px;top:37px;letter-spacing:-0.027px;"><u>P</u>layback</div>
<div class="t" style="left:219.5px;top:37px;"><u>T</u>ools</div>
<div class="t" style="left:264.8px;top:37px;letter-spacing:-0.184px;"><u>H</u>elp</div>
<div class="t" style="left:181.4px;top:82px;font-size:11px;letter-spacing:0.083px;">2:35 of 3:51</div>
<div class="t" style="left:334.1px;top:62px;font-weight:bold;letter-spacing:0.222px;">Rocky Mountain N…</div>
<div class="t" style="left:333.9px;top:79px;letter-spacing:0.085px;"><span style="color:#7d7d7a;font-size:11.2px">from</span> Beautiful Places…</div>
<div class="t" style="left:514.5px;top:70px;letter-spacing:0.124px;">Subscribe to Podcast</div>
<div class="t" style="left:685.0px;top:70px;letter-spacing:0.222px;">Update Podcasts</div>
<div class="t" style="left:191.4px;top:105px;font-size:13.33px;font-weight:bold;letter-spacing:-0.026px;">Podcasts</div>
<div class="t" style="left:580.0px;top:105px;letter-spacing:0.255px;"><u>S</u>earch:</div>
<div class="t" style="left:659.3px;top:105px;color:#8a8a86;letter-spacing:-0.119px;">Filter Results</div>
<div class="t" style="left:58.6px;top:111px;letter-spacing:-0.088px;">Now Playing</div>
<div class="t" style="left:58.6px;top:142px;letter-spacing:0.076px;">Play Queue</div>
<div class="t" style="left:58.6px;top:173px;letter-spacing:-0.057px;">Music Libr…</div>
<div class="t" style="left:74.8px;top:204px;letter-spacing:0.023px;">Favorites</div>
<div class="t" style="left:74.8px;top:235px;letter-spacing:-0.119px;">Recent Favori…</div>
<div class="t" style="left:58.6px;top:266px;letter-spacing:0.021px;">Video Library</div>
<div class="t" style="left:74.8px;top:297px;letter-spacing:0.023px;">Favorites</div>
<div class="t" style="left:74.8px;top:328px;letter-spacing:0.043px;">Unwatched</div>
<div class="t" style="left:58.6px;top:359px;font-size:13.33px;font-weight:bold;color:#fff;letter-spacing:0.099px;">Podcasts</div>
<div class="t" style="left:58.6px;top:390px;letter-spacing:0.221px;">Last.fm</div>
<div class="t" style="left:74.8px;top:421px;letter-spacing:0.101px;">Neighbors</div>
<div class="t" style="left:74.8px;top:452px;letter-spacing:0.129px;">Recommended</div>
<div class="t" style="left:139.7px;top:174px;font-size:11px;color:#8a8a86;letter-spacing:-0.030px;">(3290)</div>
<div class="t" style="left:141.9px;top:360px;font-size:11px;font-weight:bold;color:#fff;letter-spacing:0.234px;">(815)</div>
<div class="t" style="left:14.3px;top:521px;font-size:11px;font-weight:bold;letter-spacing:0.302px;">Downloading</div>
<div class="t" style="left:14.1px;top:537px;font-size:11px;letter-spacing:0.226px;">Currently transfering 2 files…</div>
<div class="t" style="left:80.5px;top:559px;color:#fff;">72%</div>
<div class="t" style="left:199.6px;top:141px;color:#fff;">All Items</div>
<div class="t" style="left:199.6px;top:166px;">New Items</div>
<div class="t" style="left:199.6px;top:191px;">Old Items</div>
<div class="t" style="left:447.1px;top:137px;">Title</div>
<div class="t" style="left:568.8px;top:137px;">Podcast</div>
<div class="t" style="left:732.3px;top:137px;letter-spacing:0.051px;">Published</div>
<div class="t" style="left:446.9px;top:168px;color:#939393;letter-spacing:-0.046px;">Yosemite Valley…</div>
<div class="t" style="left:568.9px;top:168px;color:#939393;letter-spacing:0.025px;">Beautiful Places in HD…</div>
<div class="t" style="left:732.1px;top:168px;color:#939393;letter-spacing:-0.053px;">4/30/2008</div>
<div class="t" style="left:446.9px;top:193px;letter-spacing:0.026px;">Grand Canyon: …</div>
<div class="t" style="left:568.9px;top:193px;letter-spacing:0.025px;">Beautiful Places in HD…</div>
<div class="t" style="left:732.1px;top:193px;letter-spacing:-0.053px;">4/28/2008</div>
<div class="t" style="left:446.9px;top:218px;color:#fff;letter-spacing:0.129px;">Lassen Nationa…</div>
<div class="t" style="left:732.1px;top:218px;color:#fff;letter-spacing:-0.053px;">4/14/2008</div>
<div class="t" style="left:446.9px;top:243px;letter-spacing:0.022px;">Point Reyes Nat…</div>
<div class="t" style="left:732.1px;top:243px;letter-spacing:-0.049px;">12/20/2007</div>
<div class="t" style="left:446.9px;top:268px;letter-spacing:-0.059px;">Rocky Mountain…</div>
<div class="t" style="left:732.1px;top:268px;letter-spacing:-0.053px;">11/8/2007</div>
<div class="t" style="left:446.9px;top:293px;letter-spacing:-0.035px;">Yosemite: North…</div>
<div class="t" style="left:732.1px;top:293px;letter-spacing:-0.058px;">9/6/2007</div>
<div class="t" style="left:446.9px;top:318px;letter-spacing:0.229px;">Big Sur</div>
<div class="t" style="left:732.1px;top:318px;letter-spacing:-0.053px;">8/23/2007</div>
<div class="t" style="left:446.9px;top:343px;">Yosemite: Mt. D…</div>
<div class="t" style="left:732.1px;top:343px;letter-spacing:-0.053px;">7/26/2007</div>
<div class="t" style="left:446.9px;top:368px;color:#939393;letter-spacing:-0.108px;">Redwood Natio…</div>
<div class="t" style="left:732.1px;top:368px;color:#939393;letter-spacing:-0.053px;">6/21/2007</div>
<div class="t" style="left:446.9px;top:393px;color:#939393;letter-spacing:-0.059px;">Muir Woods Nat…</div>
<div class="t" style="left:732.1px;top:393px;color:#939393;letter-spacing:-0.053px;">5/17/2007</div>
<div class="t" style="left:446.9px;top:418px;letter-spacing:0.017px;">Yosemite Falls</div>
<div class="t" style="left:732.1px;top:418px;letter-spacing:-0.058px;">4/5/2007</div>
<div class="t" style="left:446.9px;top:443px;letter-spacing:0.012px;">Arches National…</div>
<div class="t" style="left:732.1px;top:443px;letter-spacing:-0.058px;">3/1/2007</div>
<div class="t" style="left:347.9px;top:588px;letter-spacing:0.065px;">12 items, 53.5 minutes</div>
<div class="t" style="left:762.1px;top:588px;letter-spacing:-0.105px;">Repeat <u>O</u>ff</div>
<svg class="abs" style="left:745.5px;top:589px;" width="10" height="14" viewBox="0 0 10 14"><path d="M2.800 0.300h2.400v7.200h2.700L4 12.800 0.100 7.500h2.700z" fill="#1a1a1a"/></svg>
<div class="abs" style="left:559px;top:216px;width:211px;height:337px;background:#fbf8f1;border:1px solid #9c9c98"></div>
<div class="sel" style="left:562px;top:245px;width:205px;height:25px;border-radius:4px"></div>
<div class="sep" style="top:276px"></div>
<div class="sep" style="top:367px"></div>
<div class="sep" style="top:433px"></div>
<div class="sep" style="top:474px"></div>
<div class="sep" style="top:515px"></div>
<svg class="abs" style="left:568.5px;top:225.5px;" width="13" height="13" viewBox="0 0 13 13"><path d="M4.500 0.500h4v4h4v4h-4v4h-4v-4h-4v-4h4z" fill="url(#gGray)" stroke="#555753" stroke-linejoin="round"/></svg>
<svg class="abs" style="left:647px;top:250px;" width="86" height="17" viewBox="0 0 86 17"><use href="#star" transform="translate(8.20 8.6)" fill="#d6e3f4" stroke="#d6e3f4" stroke-width=".4"/><use href="#star" transform="translate(25.25 8.6)" fill="#d6e3f4" stroke="#d6e3f4" stroke-width=".4"/><use href="#star" transform="translate(42.30 8.6)" fill="#d6e3f4" stroke="#d6e3f4" stroke-width=".4"/><use href="#star" transform="translate(59.35 8.6)" fill="#d6e3f4" stroke="#d6e3f4" stroke-width=".4"/><use href="#star" transform="translate(76.40 8.6) scale(.92)" fill="none" stroke="#d6e3f4" stroke-width="1"/></svg>
<svg class="abs" style="left:566.5px;top:291.8px;" width="18" height="15" viewBox="0 0 18 15"><path d="M0.600 6.500C0.800 2.500 3.500 0.600 7 0.600c4 0 6.300 2.400 6.500 6.400h3L10.500 13.500 4.500 7h3C7.300 5 6.200 4 4.800 4 3 4 1.600 5 0.600 6.500z" fill="url(#gBlue)" stroke="#204a87" stroke-width=".9" stroke-linejoin="round"/>
<path d="M1.800 4.400C3 2.300 4.800 1.600 7 1.600" stroke="#a8c4e6" stroke-width=".8" fill="none"/></svg>
<svg class="abs" style="left:567px;top:315px;" width="16" height="16" viewBox="0 0 16 16"><use href="#dlicon"/></svg>
<svg class="abs" style="left:568.5px;top:345.5px;" width="13" height="6" viewBox="0 0 13 6"><rect x="0.500" y="0.500" width="11" height="3.600" fill="#c4c6c1" stroke="#555753"/><path d="M1.500 1.500h9" stroke="#eee"/></svg>
<svg class="abs" style="left:566.5px;top:447.7px;" width="18" height="16" viewBox="-0.5 0 18 16"><use href="#binoc"/></svg>
<svg class="abs" style="left:569px;top:528.5px;" width="16" height="17" viewBox="0 0 16 17"><path d="M0.500 1.500q0-1 1-1h8.500l3 3v11.500q0 1-1 1H1.500q-1 0-1-1z" fill="#fbfbfa" stroke="#8a8c87"/><path d="M10 0.500v3h3" fill="#dcddd9" stroke="#8a8c87" stroke-width=".8"/>
<g stroke="#a9aba6" stroke-width=".9"><path d="M2.500 4.500h6M2.500 6.500h8M2.500 8.500h8M2.500 10.500h5M2.500 12.500h4"/></g>
<path d="M5.300 13.900l1-3 6.300-6.300 2 2-6.300 6.300z" fill="#f57900" stroke="#a85200" stroke-width=".7" stroke-linejoin="round"/><path d="M5.300 13.900l1-3 2 2z" fill="#e8d5a8" stroke="#7a5a20" stroke-width=".5"/><path d="M5.300 13.900l.4-1.200 .8.800z" fill="#222"/>
<path d="M7 11.300l6-6" stroke="#fcaf3e" stroke-width=".8"/></svg>
<svg class="abs" style="left:757px;top:451px;" width="7" height="10" viewBox="0 0 7 10"><path d="M1.500 1.500l3.500 3.500-3.500 3.500" fill="none" stroke="#1a1a1a" stroke-width="1.400"/></svg>
<div class="t" style="left:587.7px;top:225px;letter-spacing:0.072px;">Add to Play Queue</div>
<div class="t" style="left:587.7px;top:250px;font-style:italic;color:#fff;letter-spacing:-0.104px;">Rating:</div>
<div class="t" style="left:587.7px;top:291px;letter-spacing:-0.088px;">Visit Website</div>
<div class="t" style="left:587.7px;top:316px;letter-spacing:0.106px;">Download Podcast(s)</div>
<div class="t" style="left:587.7px;top:341px;letter-spacing:-0.013px;">Remove Downloaded File(s)</div>
<div class="t" style="left:587.7px;top:382px;letter-spacing:0.032px;">Mark as Old</div>
<div class="t" style="left:587.7px;top:407px;letter-spacing:0.090px;">Mark as New</div>
<div class="t" style="left:587.7px;top:448px;letter-spacing:0.320px;"><u>S</u>earch</div>
<div class="t" style="left:587.7px;top:489px;letter-spacing:0.017px;"><u>J</u>ump to Playing Video</div>
<div class="t" style="left:587.7px;top:530px;letter-spacing:-0.048px;"><u>E</u>dit Track Information</div>
</body>
</html>
